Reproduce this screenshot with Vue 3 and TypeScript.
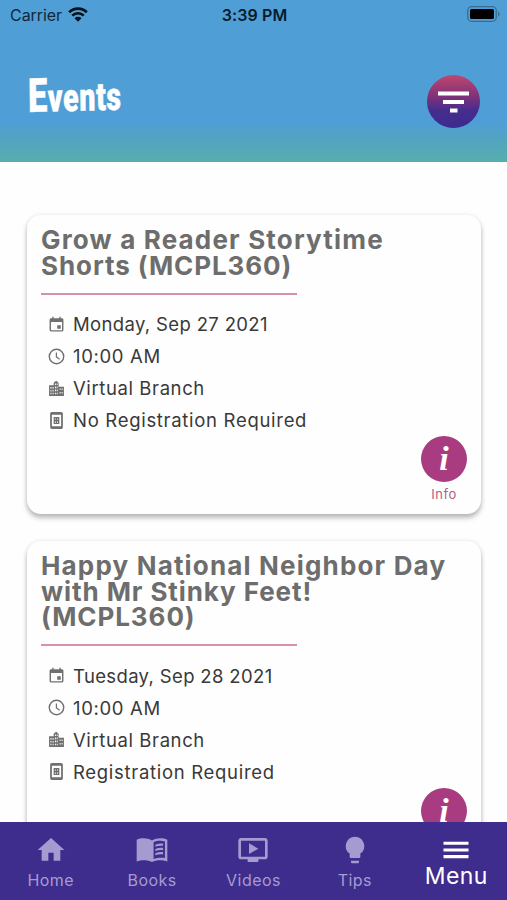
<script setup lang="ts">
interface EventItem {
  title: string[]
  details: { icon: string; text: string }[]
}

const icons: Record<string, string> = {
  date: 'M18 13h-5v5h5v-5zM16 1v2H8V1H6v2H4.500C3.200 3 2.200 4 2.200 5.200v14.600c0 1.200 1 2.200 2.300 2.200h15c1.300 0 2.300-1 2.300-2.200V5.200C21.800 4 20.800 3 19.500 3H18V1h-2zm3.800 19H4.200V8.500h15.600V20z',
  time: 'M12 .8a11.200 11.200 0 1 0 0 22.400A11.200 11.200 0 0 0 12 .8zm0 2a9.200 9.200 0 1 1 0 18.400 9.200 9.200 0 0 1 0-18.400zM11 6.500h1.700v5.600l4.200 2.900-.9 1.500-5-3.500z',
  place: 'M8 4l3.500-3L15 4v5.500h7.500v13h-21V7.500H8V4zm2 1v2h1.300V5H10zm2.300 0v2h1.300V5h-1.300zM10 9v2.500h1.300V9H10zm2.300 0v2.500h1.300V9h-1.300zM3.500 10v2.200h1.400V10H3.500zm0 4v2.200h1.400V14H3.500zm0 4v2.200h1.400V18H3.500zm3-8v2.200h1.400V10H6.500zm0 4v2.200h1.400V14H6.500zm0 4v2.200h1.400V18H6.500zm3.500-4.500V16h1.300v-2.500H10zm2.300 0V16h1.300v-2.500h-1.300zM10 18v2.200h1.300V18H10zm2.300 0v2.200h1.300V18h-1.300zm4.200-6v2.200h1.300V12h-1.300zm2.800 0v2.200h1.300V12h-1.300zm-2.800 5v2.200h1.300V17h-1.300zm2.800 0v2.200h1.300V17h-1.300z',
  registration: 'M5.500 0h13C19.900 0 21 1.100 21 2.500v19c0 1.400-1.100 2.500-2.500 2.500h-13A2.500 2.500 0 0 1 3 21.500v-19C3 1.100 4.100 0 5.500 0zM5.500 4v16h13V4h-13zM8 7h8v10H8V7zm1.800 2v1.500h1.400V9H9.800zm3 0v1.500h1.400V9h-1.400zm-3 4.500V15h1.400v-1.500H9.800zm3 0V15h1.400v-1.500h-1.400z',
}

const events: EventItem[] = [
  {
    title: ['Grow a Reader Storytime', 'Shorts (MCPL360)'],
    details: [
      { icon: 'date', text: 'Monday, Sep 27 2021' },
      { icon: 'time', text: '10:00 AM' },
      { icon: 'place', text: 'Virtual Branch' },
      { icon: 'registration', text: 'No Registration Required' },
    ],
  },
  {
    title: ['Happy National Neighbor Day', 'with Mr Stinky Feet!', '(MCPL360)'],
    details: [
      { icon: 'date', text: 'Tuesday, Sep 28 2021' },
      { icon: 'time', text: '10:00 AM' },
      { icon: 'place', text: 'Virtual Branch' },
      { icon: 'registration', text: 'Registration Required' },
    ],
  },
]

const tabs = [
  { label: 'Home', path: 'M10 20v-6h4v6h5v-8h3L12 3 2 12h3v8z' },
  {
    label: 'Books',
    path: 'M.5 4.300C4 2.800 8.500 2.900 12 4.800c3.500-1.900 8-2 11.500-.5v16.400c-3.500-1.500-8-1.500-11.500.3-3.500-1.800-8-1.800-11.500-.3zM13.200 6.200v12.600c2.500-1 5.500-1.300 8.500-.8V5.600c-3-.8-6-.5-8.500.6zM14.500 8c1.800-.7 3.800-1 5.800-.7v1.600c-2-.3-4 0-5.800.7zm0 3.200c1.800-.7 3.800-1 5.800-.7v1.600c-2-.3-4 0-5.800.7zm0 3.200c1.800-.7 3.800-1 5.800-.7v1.600c-2-.3-4 0-5.800.7z',
  },
  { label: 'Videos', path: 'M21 3H3c-1.100 0-2 .9-2 2v12c0 1.100.9 2 2 2h5v2h8v-2h5c1.100 0 2-.9 2-2V5c0-1.100-.9-2-2-2zm0 14H3V5h18v12zM9 7v8l7-4z' },
  { label: 'Tips', path: 'M9 21c0 .6.400 1 1 1h4c.6 0 1-.4 1-1v-1H9v1zm3-19a7 7 0 0 0-4 12.700V17c0 .6.400 1 1 1h6c.6 0 1-.4 1-1v-2.300A7 7 0 0 0 12 2z' },
  { label: 'Menu', path: 'M2 18.500h20V16H2v2.500zm0-5.300h20v-2.500H2v2.500zM2 5.300v2.500h20V5.300H2z' },
]
</script>

<template>
  <div class="screen">
    <header class="header">
      <div class="status">
        <div class="carrier">
          <span>Carrier</span>
          <svg class="wifi" viewBox="0 0 20 15">
            <path d="M1.200 5.300a12.500 12.500 0 0 1 17.600 0M4.300 8.600a8.100 8.100 0 0 1 11.400 0" />
            <path class="wifi-dot" d="M6.500 11.200a5 5 0 0 1 7 0L10 14.800z" />
          </svg>
        </div>
        <span class="clock">3:39 PM</span>
        <svg class="battery" viewBox="0 0 34 16">
          <rect class="battery-shell" x=".7" y=".7" width="28.600" height="14.600" rx="4" />
          <rect x="3" y="3" width="24" height="10" rx="1.500" />
          <path class="battery-tip" d="M31 5.500c2 .6 2 4.400 0 5z" />
        </svg>
      </div>
      <div class="heading">
        <h1><span class="initial">E</span>vents</h1>
        <button class="filter" aria-label="Filter">
          <svg viewBox="0 0 31 22"><path d="M0 .5h31v4H0zM5 9h21v4H5zM12 17.500h7.500v4H12z" /></svg>
        </button>
      </div>
    </header>

    <main class="list">
      <article v-for="event in events" :key="event.title[0]" class="card">
        <h2>
          <span v-for="line in event.title" :key="line">{{ line }}</span>
        </h2>
        <div class="rule"></div>
        <ul>
          <li v-for="detail in event.details" :key="detail.icon">
            <svg viewBox="0 0 24 24"><path fill-rule="evenodd" :d="icons[detail.icon]" /></svg>
            <span :class="detail.icon">{{ detail.text }}</span>
          </li>
        </ul>
        <button class="info">
          <span class="badge">i</span>
          <span class="caption">Info</span>
        </button>
      </article>
    </main>

    <nav class="tabs">
      <a v-for="tab in tabs" :key="tab.label" :class="['tab', { active: tab.label === 'Menu' }]">
        <svg viewBox="0 0 24 24"><path fill-rule="evenodd" :d="tab.path" /></svg>
        <span>{{ tab.label }}</span>
      </a>
    </nav>
  </div>
</template>

<style>
body {
  background: #fefefe;
}
</style>

<style scoped>
* {
  box-sizing: border-box;
}
.screen {
  display: flex;
  flex-direction: column;
  width: 507px;
  height: 900px;
  overflow: hidden;
  background: #fefefe;
  font-family: Inter, "Liberation Sans", sans-serif;
}
button {
  padding: 0;
  border: 0;
  background: none;
  font: inherit;
}
.header {
  flex: none;
  height: 162px;
  background: linear-gradient(#509ed6 0, #4f9ed7 122px, #52a3c2 138px, #58aeac 162px);
}
.status {
  display: grid;
  grid-template-columns: 1fr auto 1fr;
  align-items: center;
  height: 30px;
  padding: 0 8px 0 10px;
  color: #10293a;
}
.carrier {
  display: flex;
  align-items: center;
  gap: 6px;
  font-size: 16px;
  letter-spacing: -0.05px;
}
.wifi {
  width: 20px;
  height: 15px;
  margin-top: -1px;
  fill: none;
  stroke: #03101a;
  stroke-width: 2.7;
}
.wifi .wifi-dot {
  fill: #03101a;
  stroke: none;
}
.clock {
  font-size: 16px;
  font-weight: 600;
  letter-spacing: 0.1px;
  color: #071c2a;
}
.battery {
  justify-self: end;
  width: 34px;
  height: 16px;
  margin: -2px -2px 0 0;
}
.battery-shell {
  fill: none;
  stroke: #386d92;
  stroke-width: 1.3;
}
.battery-tip {
  fill: #386d92;
}
.heading {
  display: flex;
  justify-content: space-between;
  padding: 45px 27px 0 28px;
}
h1 {
  width: 94px;
  height: 42px;
  margin: 0;
  color: #fff;
  font: 900 39px/42px Roboto, sans-serif;
  letter-spacing: 0.9px;
  white-space: nowrap;
  transform: scaleX(0.73) rotate(-1deg);
  transform-origin: left center;
  -webkit-text-stroke: 0.5px #fff;
}
.initial {
  font-size: 47px;
}
.filter {
  display: grid;
  place-items: center;
  width: 53px;
  height: 53px;
  border-radius: 50%;
  background: linear-gradient(#be4770 0%, #843278 38%, #462d8d 66%, #3c2b90 100%);
}
.filter svg {
  width: 31px;
  height: 22px;
  fill: #fff;
}
.list {
  display: flex;
  flex: 1;
  flex-direction: column;
  gap: 27px;
  min-height: 0;
  padding: 53px 26px 0 27px;
  overflow: hidden;
}
.card {
  display: flex;
  flex: none;
  flex-direction: column;
  padding: 12px 14px 12px;
  border-radius: 14px;
  background: #fefefe;
  box-shadow: 0 4px 5px rgba(0, 0, 0, 0.25), 0 0 5px rgba(0, 0, 0, 0.09);
}
h2 {
  margin: 0;
  color: #6d6d6d;
  font-size: 26px;
  font-weight: 700;
  line-height: 25.500px;
  letter-spacing: 0.92px;
}
h2 span {
  display: block;
  white-space: nowrap;
}
h2 span:first-child {
  letter-spacing: 1.17px;
}
.rule {
  width: 256px;
  height: 2px;
  margin: 14.500px 0 13.500px;
  background: #d592a8;
}
ul {
  margin: 0;
  padding: 0 0 0 7px;
  list-style: none;
}
li {
  display: flex;
  align-items: center;
  gap: 8px;
  height: 32px;
  color: #393939;
  font-size: 18.500px;
  letter-spacing: 0.35px;
  white-space: nowrap;
}
li svg {
  width: 17px;
  height: 17px;
  fill: #707070;
}
.time {
  letter-spacing: 0.65px;
}
.place {
  letter-spacing: 0.6px;
}
.registration {
  letter-spacing: 0.7px;
}
.info {
  display: flex;
  flex-direction: column;
  align-items: center;
  align-self: flex-end;
  width: 46px;
}
.badge {
  width: 46px;
  height: 46px;
  border-radius: 50%;
  background: #a93c80;
  color: #fff;
  font: italic bold 34px/46px "Liberation Serif", serif;
  text-align: center;
}
.caption {
  margin-top: 4px;
  color: #b85a88;
  font-size: 13px;
  line-height: 16px;
  letter-spacing: 0.55px;
}
.tabs {
  display: grid;
  flex: none;
  grid-template-columns: repeat(5, 1fr);
  height: 78px;
  background: #3e2d8c;
}
.tab {
  display: flex;
  flex-direction: column;
  align-items: center;
  padding-top: 12px;
  color: #a69bd1;
  font-size: 16px;
  line-height: 20px;
  letter-spacing: 0.45px;
}
.tab svg {
  width: 32px;
  height: 32px;
  margin-bottom: 4px;
  fill: currentColor;
}
.tab.active {
  color: #fff;
  font-size: 23px;
  line-height: 24px;
}
.tab.active svg {
  width: 30px;
  margin-bottom: -2px;
}
</style>
